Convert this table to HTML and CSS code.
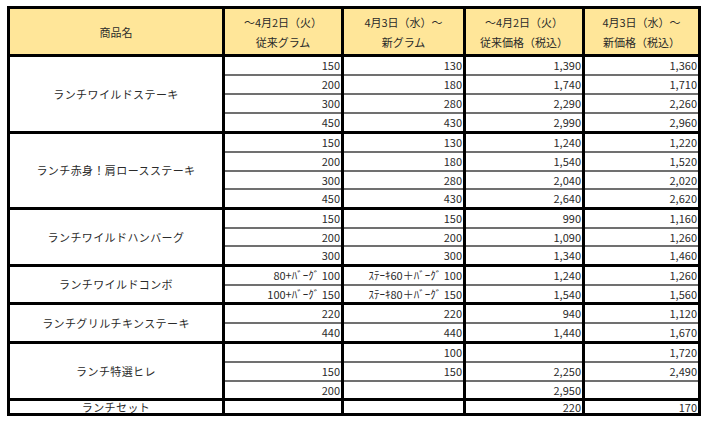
FILE: index.html
```html
<!DOCTYPE html>
<html lang="ja">
<head>
<meta charset="utf-8">
<title>価格表</title>
<link rel="stylesheet" href="styles.css">
</head>
<body>
<div class="wrap">
<table class="price">
  <colgroup>
    <col class="c-name"><col class="c-g1"><col class="c-g2"><col class="c-p1"><col class="c-p2">
  </colgroup>
  <thead>
    <tr class="head">
      <th>商品名</th>
      <th>～4月2日（火）<br>従来グラム</th>
      <th>4月3日（水）～<br>新グラム</th>
      <th>～4月2日（火）<br>従来価格（税込）</th>
      <th>4月3日（水）～<br>新価格（税込）</th>
    </tr>
  </thead>
  <tbody>
    <tr class="first"><td class="name" rowspan="4">ランチワイルドステーキ</td><td>150</td><td>130</td><td>1,390</td><td>1,360</td></tr>
    <tr><td>200</td><td>180</td><td>1,740</td><td>1,710</td></tr>
    <tr><td>300</td><td>280</td><td>2,290</td><td>2,260</td></tr>
    <tr><td>450</td><td>430</td><td>2,990</td><td>2,960</td></tr>

    <tr class="first"><td class="name" rowspan="4">ランチ赤身！肩ロースステーキ</td><td>150</td><td>130</td><td>1,240</td><td>1,220</td></tr>
    <tr><td>200</td><td>180</td><td>1,540</td><td>1,520</td></tr>
    <tr class="short"><td>300</td><td>280</td><td>2,040</td><td>2,020</td></tr>
    <tr><td>450</td><td>430</td><td>2,640</td><td>2,620</td></tr>

    <tr class="first"><td class="name" rowspan="3">ランチワイルドハンバーグ</td><td>150</td><td>150</td><td>990</td><td>1,160</td></tr>
    <tr class="short"><td>200</td><td>200</td><td>1,090</td><td>1,260</td></tr>
    <tr><td>300</td><td>300</td><td>1,340</td><td>1,460</td></tr>

    <tr class="first"><td class="name" rowspan="2">ランチワイルドコンボ</td><td>80+ﾊﾞｰｸﾞ 100</td><td>ｽﾃｰｷ60＋ﾊﾞｰｸﾞ 100</td><td>1,240</td><td>1,260</td></tr>
    <tr class="short"><td>100+ﾊﾞｰｸﾞ 150</td><td>ｽﾃｰｷ80＋ﾊﾞｰｸﾞ 150</td><td>1,540</td><td>1,560</td></tr>

    <tr class="first"><td class="name" rowspan="2">ランチグリルチキンステーキ</td><td>220</td><td>220</td><td>940</td><td>1,120</td></tr>
    <tr><td>440</td><td>440</td><td>1,440</td><td>1,670</td></tr>

    <tr class="first"><td class="name" rowspan="3">ランチ特選ヒレ</td><td></td><td>100</td><td></td><td>1,720</td></tr>
    <tr><td>150</td><td>150</td><td>2,250</td><td>2,490</td></tr>
    <tr class="short"><td>200</td><td></td><td>2,950</td><td></td></tr>

    <tr class="first last"><td class="name">ランチセット</td><td></td><td></td><td>220</td><td>170</td></tr>
  </tbody>
</table>
</div>
</body>
</html>
```

FILE: styles.css
```css
html, body {
  margin: 0;
  padding: 0;
  background: #ffffff;
}

.wrap {
  padding: 6px 0 0 7px;
}

.price {
  border-collapse: collapse;
  table-layout: fixed;
  width: 691px;
  border: 3px solid #000;
  font-family: "Noto Sans CJK JP", "Noto Sans", sans-serif;
  font-size: 11px;
  color: #2a2a2a;
}

.c-name { width: 215px; }
.c-g1 { width: 119px; }
.c-g2 { width: 122px; }
.c-p1 { width: 119px; }
.c-p2 { width: 116px; }

.price th {
  background: #ffe699;
  font-weight: normal;
  line-height: 20px;
  height: 45px;
  padding: 0;
  border: 3px solid #000;
  text-align: center;
  vertical-align: middle;
}

.price td {
  height: 17px;
  padding: 0 1px 0 0;
  line-height: 17px;
  text-align: right;
  white-space: nowrap;
  border-left: 3px solid #000;
  border-right: 3px solid #000;
  border-top: 2px solid #707070;
  border-bottom: 2px solid #707070;
}

.price tr.short td {
  height: 16px;
  line-height: 16px;
}

.price tr.first td {
  border-top: 3px solid #000;
}

.price td.name {
  text-align: center;
  vertical-align: middle;
  letter-spacing: 0.4px;
  border-top: 3px solid #000;
  border-bottom: 3px solid #000;
  padding: 0;
}

.price tr.last td {
  height: 12px;
  line-height: 12px;
  border-bottom: 3px solid #000;
}
```
